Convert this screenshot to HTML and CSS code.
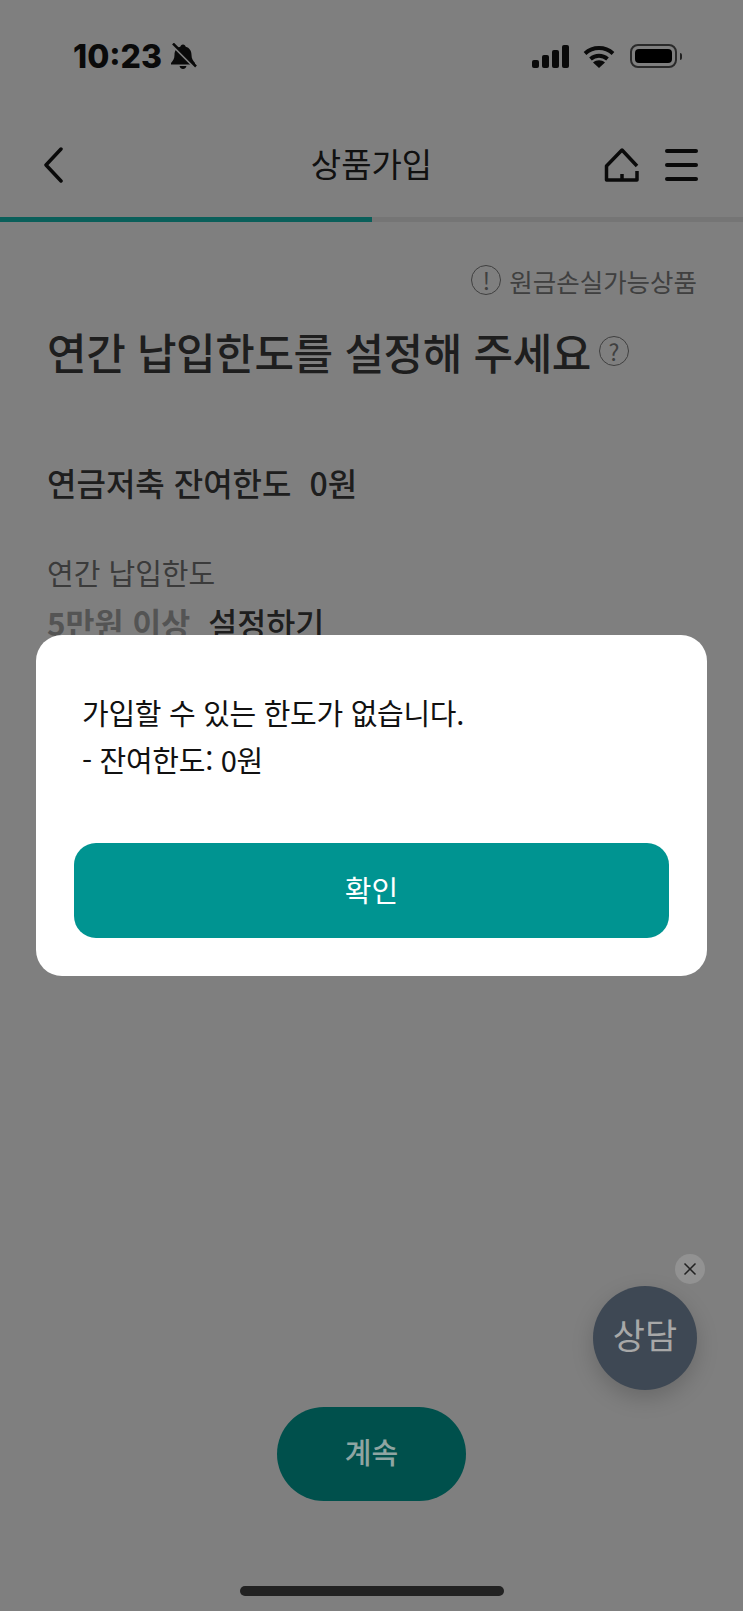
FILE: index.html
```html
<!DOCTYPE html>
<html lang="ko">
<head>
    <meta charset="UTF-8">
    <meta name="viewport" content="width=device-width, initial-scale=1.0">
    <title>상품가입</title>
    <link rel="stylesheet" href="styles.css">
</head>
<body>
    <div class="screen">
        <div class="status-bar">
            <div class="status-left">
                <span class="clock">10:23</span>
                <svg class="bell" viewBox="0 0 28 26" width="28" height="27">
                    <path d="M14 1c1.500 0 2.500 1 2.700 2.300 3.800 1 5.800 4 5.800 8 0 4 1.500 6 3.500 8.200v1.500H2v-1.500c2-2.200 3.500-4.200 3.500-8.200 0-4 2-7 5.800-8C11.500 2 12.500 1 14 1z"/>
                    <path d="M10.500 22.500h7c-.5 2-1.800 3-3.500 3s-3-1-3.500-3z"/>
                    <path class="bell-gap" d="M2 0l25 25"/>
                    <path class="bell-slash" d="M4 0l23 23"/>
                </svg>
            </div>
            <div class="status-right">
                <svg viewBox="0 0 37 23" width="37" height="23">
                    <rect x="0" y="15" width="7" height="8" rx="2"/>
                    <rect x="10" y="10" width="7" height="13" rx="2"/>
                    <rect x="20" y="5" width="7" height="18" rx="2"/>
                    <rect x="30" y="0" width="7" height="23" rx="2"/>
                </svg>
                <svg class="wifi" viewBox="0 0 32 23" width="32" height="23">
                    <path class="wifi-arc" d="M2 8.500c8-7.300 20-7.300 28 0"/>
                    <path class="wifi-arc" d="M7.500 14c5-4.300 12-4.300 17 0"/>
                    <path d="M16 23l-6-5.600c3.500-2.800 8.500-2.800 12 0z"/>
                </svg>
                <div class="battery"><div class="battery-fill"></div></div>
                <div class="battery-nub"></div>
            </div>
        </div>

        <div class="nav-bar">
            <svg class="nav-back" viewBox="0 0 20 36" width="20" height="36">
                <path d="M18 2L3 18l15 16"/>
            </svg>
            <h1 class="nav-title">상품가입</h1>
            <div class="nav-actions">
                <svg class="nav-home" viewBox="0 0 35 34" width="35" height="34">
                    <path d="M33 18L18 2 2.500 18v14H33v-9"/>
                    <path d="M18 32v-6"/>
                </svg>
                <div class="burger">
                    <span></span>
                    <span></span>
                    <span></span>
                </div>
            </div>
        </div>

        <div class="progress"><div class="progress-value"></div></div>

        <div class="content">
            <div class="risk-note">
                <span class="round-mark risk-mark">!</span>
                <span>원금손실가능상품</span>
            </div>
            <h2 class="headline">
                <span>연간 납입한도를 설정해 주세요</span>
                <span class="round-mark help-mark">?</span>
            </h2>
            <p class="remain">연금저축 잔여한도&nbsp; 0원</p>
            <p class="limit-label">연간 납입한도</p>
            <p class="limit-value"><span class="limit-min">5만원 이상</span><span>설정하기</span></p>
        </div>

        <div class="scrim"></div>

        <div class="bottom-action">
            <button class="next-btn" type="button">계속</button>
        </div>

        <div class="dialog">
            <p class="dialog-text">가입할 수 있는 한도가 없습니다.<br>- 잔여한도: 0원</p>
            <button class="confirm-btn" type="button">확인</button>
        </div>

        <div class="consult">상담</div>
        <div class="consult-close">
            <svg viewBox="0 0 14 14" width="14" height="14">
                <path d="M1.500 1.500l11 11M12.500 1.500l-11 11"/>
            </svg>
        </div>
        <div class="home-indicator"></div>
    </div>
</body>
</html>
```

FILE: styles.css
```css
* {
    box-sizing: border-box;
}

body {
    margin: 0;
    font-family: "Noto Sans CJK KR", "Noto Sans", sans-serif;
    background: #fff;
}

p, h1, h2 {
    margin: 0;
    font-weight: 400;
}

.screen {
    position: relative;
    display: flex;
    flex-direction: column;
    width: 743px;
    height: 1611px;
    overflow: hidden;
    background: #fff;
    color: #222;
}

/* status bar */
.status-bar {
    display: flex;
    justify-content: space-between;
    align-items: center;
    height: 112px;
    padding: 0 61px 0 73px;
}

.status-left {
    display: flex;
    align-items: center;
    gap: 7px;
}

.clock {
    font-family: Inter, sans-serif;
    font-weight: 800;
    font-size: 32px;
    color: #141414;
}

.bell {
    fill: #141414;
}

.bell-gap {
    fill: none;
    stroke: #fff;
    stroke-width: 3;
}

.bell-slash {
    fill: none;
    stroke: #141414;
    stroke-width: 2.500;
}

.status-right {
    display: flex;
    align-items: center;
    fill: #141414;
}

.wifi {
    margin-left: 14px;
}

.wifi-arc {
    fill: none;
    stroke: #141414;
    stroke-width: 4;
}

.battery {
    width: 47px;
    height: 24px;
    margin-left: 15px;
    padding: 3px;
    border: 2px solid #555;
    border-radius: 8px;
}

.battery-fill {
    height: 100%;
    border-radius: 4px;
    background: #000;
}

.battery-nub {
    width: 2px;
    height: 7px;
    margin-left: 3px;
    border-radius: 0 2px 2px 0;
    background: #444;
}

/* nav */
.nav-bar {
    position: relative;
    display: flex;
    justify-content: space-between;
    align-items: center;
    height: 105px;
    padding: 0 45px 0 43px;
}

.nav-back {
    fill: none;
    stroke: #141414;
    stroke-width: 3.500;
    stroke-linecap: round;
    stroke-linejoin: round;
}

.nav-title {
    position: absolute;
    left: 0;
    right: 0;
    margin-bottom: 4px;
    text-align: center;
    font-size: 33px;
    color: #222;
}

.nav-actions {
    display: flex;
    align-items: center;
    gap: 26px;
}

.nav-home {
    fill: none;
    stroke: #141414;
    stroke-width: 3.500;
    stroke-linejoin: round;
}

.burger {
    display: flex;
    flex-direction: column;
    gap: 10px;
    width: 33px;
}

.burger span {
    height: 4px;
    border-radius: 2px;
    background: #141414;
}

.progress {
    height: 5px;
    background: #eaeaea;
}

.progress-value {
    width: 372px;
    height: 100%;
    background: #14beb4;
}

/* content */
.content {
    padding: 42px 46px 0 47px;
}

.round-mark {
    display: flex;
    justify-content: center;
    align-items: center;
    flex: none;
    border-radius: 50%;
    border-style: solid;
    line-height: 1;
}

.risk-note {
    display: flex;
    justify-content: flex-end;
    align-items: center;
    gap: 8px;
    height: 32px;
    font-size: 25.500px;
    color: #808080;
}

.risk-mark {
    width: 30px;
    height: 30px;
    border-width: 1.500px;
    font-size: 24px;
}

.headline {
    display: flex;
    align-items: center;
    gap: 8px;
    margin-top: 20px;
    height: 70px;
    font-size: 43px;
    font-weight: 500;
    line-height: 70px;
    letter-spacing: -0.4px;
    color: #3c3c3c;
}

.help-mark {
    width: 30px;
    height: 30px;
    border-width: 1.500px;
    font-size: 23px;
    font-weight: 400;
    letter-spacing: 0;
    color: #808080;
}

.remain {
    margin-top: 74px;
    font-size: 32px;
    font-weight: 500;
    line-height: 44px;
    color: #3c3c3c;
}

.limit-label {
    margin-top: 48px;
    font-size: 29px;
    line-height: 40px;
    color: #777;
}

.limit-value {
    display: flex;
    gap: 18px;
    margin-top: 8px;
    font-size: 31.500px;
    font-weight: 500;
    line-height: 44px;
    color: #3c3c3c;
}

.limit-min {
    font-weight: 700;
    color: #a8a8a8;
}

/* bottom button */
.scrim {
    position: absolute;
    inset: 0;
    background: rgba(0, 0, 0, 0.5);
}

.bottom-action {
    position: relative;
    display: flex;
    justify-content: center;
    margin-top: auto;
    padding-bottom: 110px;
}

.next-btn {
    width: 189px;
    height: 94px;
    padding: 0 0 6px;
    border: 0;
    border-radius: 47px;
    background: #00504c;
    font-family: inherit;
    font-size: 29px;
    font-weight: 500;
    color: #8fa5a2;
}

/* dialog */
.dialog {
    position: absolute;
    left: 36px;
    top: 635px;
    width: 671px;
    height: 341px;
    padding: 54px 38px 38px;
    border-radius: 26px;
    background: #fff;
}

.dialog-text {
    padding-left: 8px;
    font-size: 29px;
    line-height: 47px;
    letter-spacing: -0.3px;
    color: #111;
}

.confirm-btn {
    display: block;
    width: 100%;
    height: 95px;
    margin-top: 60px;
    padding: 0 0 4px;
    border: 0;
    border-radius: 22px;
    background: #009491;
    font-family: inherit;
    font-size: 29px;
    color: #fff;
}

/* floating */
.consult {
    position: absolute;
    left: 593px;
    top: 1286px;
    display: flex;
    justify-content: center;
    align-items: center;
    width: 104px;
    height: 104px;
    padding-bottom: 10px;
    border-radius: 50%;
    background: #3e4854;
    box-shadow: 0 8px 22px rgba(0, 0, 0, 0.18);
    font-size: 35px;
    color: #a8a8a8;
}

.consult-close {
    position: absolute;
    left: 675px;
    top: 1254px;
    display: flex;
    justify-content: center;
    align-items: center;
    width: 30px;
    height: 30px;
    border-radius: 50%;
    background: #929292;
}

.consult-close path {
    fill: none;
    stroke: #222;
    stroke-width: 1.500;
}

.home-indicator {
    position: absolute;
    left: 240px;
    top: 1586px;
    width: 264px;
    height: 10px;
    border-radius: 5px;
    background: #222;
}
```
